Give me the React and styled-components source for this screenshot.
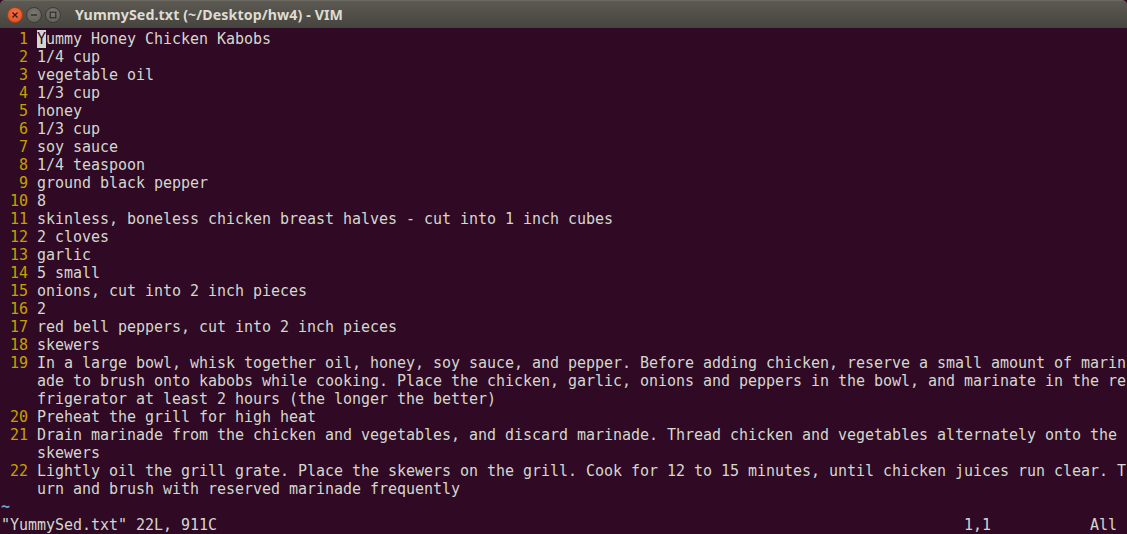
import React from 'react';
import styled, { createGlobalStyle } from 'styled-components';

const GlobalStyle = createGlobalStyle`
  html, body {
    margin: 0;
    padding: 0;
    background: #300a24;
    overflow: hidden;
  }
`;

const Window = styled.div`
  width: 1127px;
  height: 534px;
  display: flex;
  flex-direction: column;
  background: #300a24;
  overflow: hidden;
`;

const TitleBar = styled.div`
  height: 28px;
  flex: none;
  display: flex;
  align-items: center;
  padding-left: 7px;
  background: linear-gradient(#5c5a52, #45443e);
  border-top: 1px solid #6b6960;
  box-sizing: border-box;
  border-radius: 5px 5px 0 0;
`;

const Controls = styled.div`
  display: flex;
  gap: 3px;
  margin-right: 14px;
`;

const Circle = styled.div`
  width: 16px;
  height: 16px;
  border-radius: 50%;
  display: flex;
  align-items: center;
  justify-content: center;
  box-sizing: border-box;
  background: ${(p) =>
    p.$close
      ? 'radial-gradient(circle at 50% 35%, #f2734a, #df4b1c)'
      : 'radial-gradient(circle at 50% 35%, #7a7872, #5e5c56)'};
  border: 1px solid ${(p) => (p.$close ? '#b83a14' : '#3c3b36')};
`;

const Title = styled.div`
  font-family: 'Noto Sans', 'DejaVu Sans', sans-serif;
  font-weight: 700;
  font-size: 14.2px;
  color: #dfdbd2;
  letter-spacing: 0.1px;
`;

const Editor = styled.div`
  flex: 1;
  padding: 2px 0 0 1px;
  font-family: 'DejaVu Sans Mono', monospace;
  font-size: 15px;
  letter-spacing: -0.03px;
  line-height: 18px;
  color: #d3d7cf;
  white-space: pre;
  overflow: hidden;
`;

const Row = styled.div`
  display: flex;
  height: 18px;
`;

const Num = styled.span`
  width: 36px;
  flex: none;
  text-align: right;
  padding-right: 9px;
  box-sizing: border-box;
  color: #c4a000;
`;

const Text = styled.span``;

const Cursor = styled.span`
  background: #d3d7cf;
  color: #300a24;
`;

const Tilde = styled.div`
  height: 18px;
  color: #729fcf;
  font-weight: 700;
`;

const Status = styled.div`
  display: flex;
  justify-content: space-between;
  height: 18px;
  padding-right: 10px;
`;

const Ruler = styled.span`
  display: flex;
  gap: 99px;
`;

const lines = [
  ['Yummy Honey Chicken Kabobs'],
  ['1/4 cup'],
  ['vegetable oil'],
  ['1/3 cup'],
  ['honey'],
  ['1/3 cup'],
  ['soy sauce'],
  ['1/4 teaspoon'],
  ['ground black pepper'],
  ['8'],
  ['skinless, boneless chicken breast halves - cut into 1 inch cubes'],
  ['2 cloves'],
  ['garlic'],
  ['5 small'],
  ['onions, cut into 2 inch pieces'],
  ['2'],
  ['red bell peppers, cut into 2 inch pieces'],
  ['skewers'],
  [
    'In a large bowl, whisk together oil, honey, soy sauce, and pepper. Before adding chicken, reserve a small amount of marin',
    'ade to brush onto kabobs while cooking. Place the chicken, garlic, onions and peppers in the bowl, and marinate in the re',
    'frigerator at least 2 hours (the longer the better)',
  ],
  ['Preheat the grill for high heat'],
  [
    'Drain marinade from the chicken and vegetables, and discard marinade. Thread chicken and vegetables alternately onto the ',
    'skewers',
  ],
  [
    'Lightly oil the grill grate. Place the skewers on the grill. Cook for 12 to 15 minutes, until chicken juices run clear. T',
    'urn and brush with reserved marinade frequently',
  ],
];

export default function App() {
  return (
    <Window>
      <GlobalStyle />
      <TitleBar>
        <Controls>
          <Circle $close>
            <svg width="8" height="8" viewBox="0 0 8 8">
              <path d="M1.5 1.5 L6.5 6.5 M6.5 1.5 L1.5 6.5" stroke="#3a1a10" strokeWidth="1.4" />
            </svg>
          </Circle>
          <Circle>
            <svg width="8" height="8" viewBox="0 0 8 8">
              <path d="M1 4 H7" stroke="#2e2d29" strokeWidth="1.4" />
            </svg>
          </Circle>
          <Circle>
            <svg width="8" height="8" viewBox="0 0 8 8">
              <rect x="1.2" y="1.2" width="5.6" height="5.6" fill="none" stroke="#2e2d29" strokeWidth="1.2" />
            </svg>
          </Circle>
        </Controls>
        <Title>YummySed.txt (~/Desktop/hw4) - VIM</Title>
      </TitleBar>
      <Editor>
        {lines.map((rows, i) =>
          rows.map((r, j) => (
            <Row key={`${i}-${j}`}>
              <Num>{j === 0 ? i + 1 : ''}</Num>
              {i === 0 ? (
                <Text>
                  <Cursor>{r[0]}</Cursor>
                  {r.slice(1)}
                </Text>
              ) : (
                <Text>{r}</Text>
              )}
            </Row>
          ))
        )}
        <Tilde>~</Tilde>
        <Status>
          <span>"YummySed.txt" 22L, 911C</span>
          <Ruler>
            <span>1,1</span>
            <span>All</span>
          </Ruler>
        </Status>
      </Editor>
    </Window>
  );
}
